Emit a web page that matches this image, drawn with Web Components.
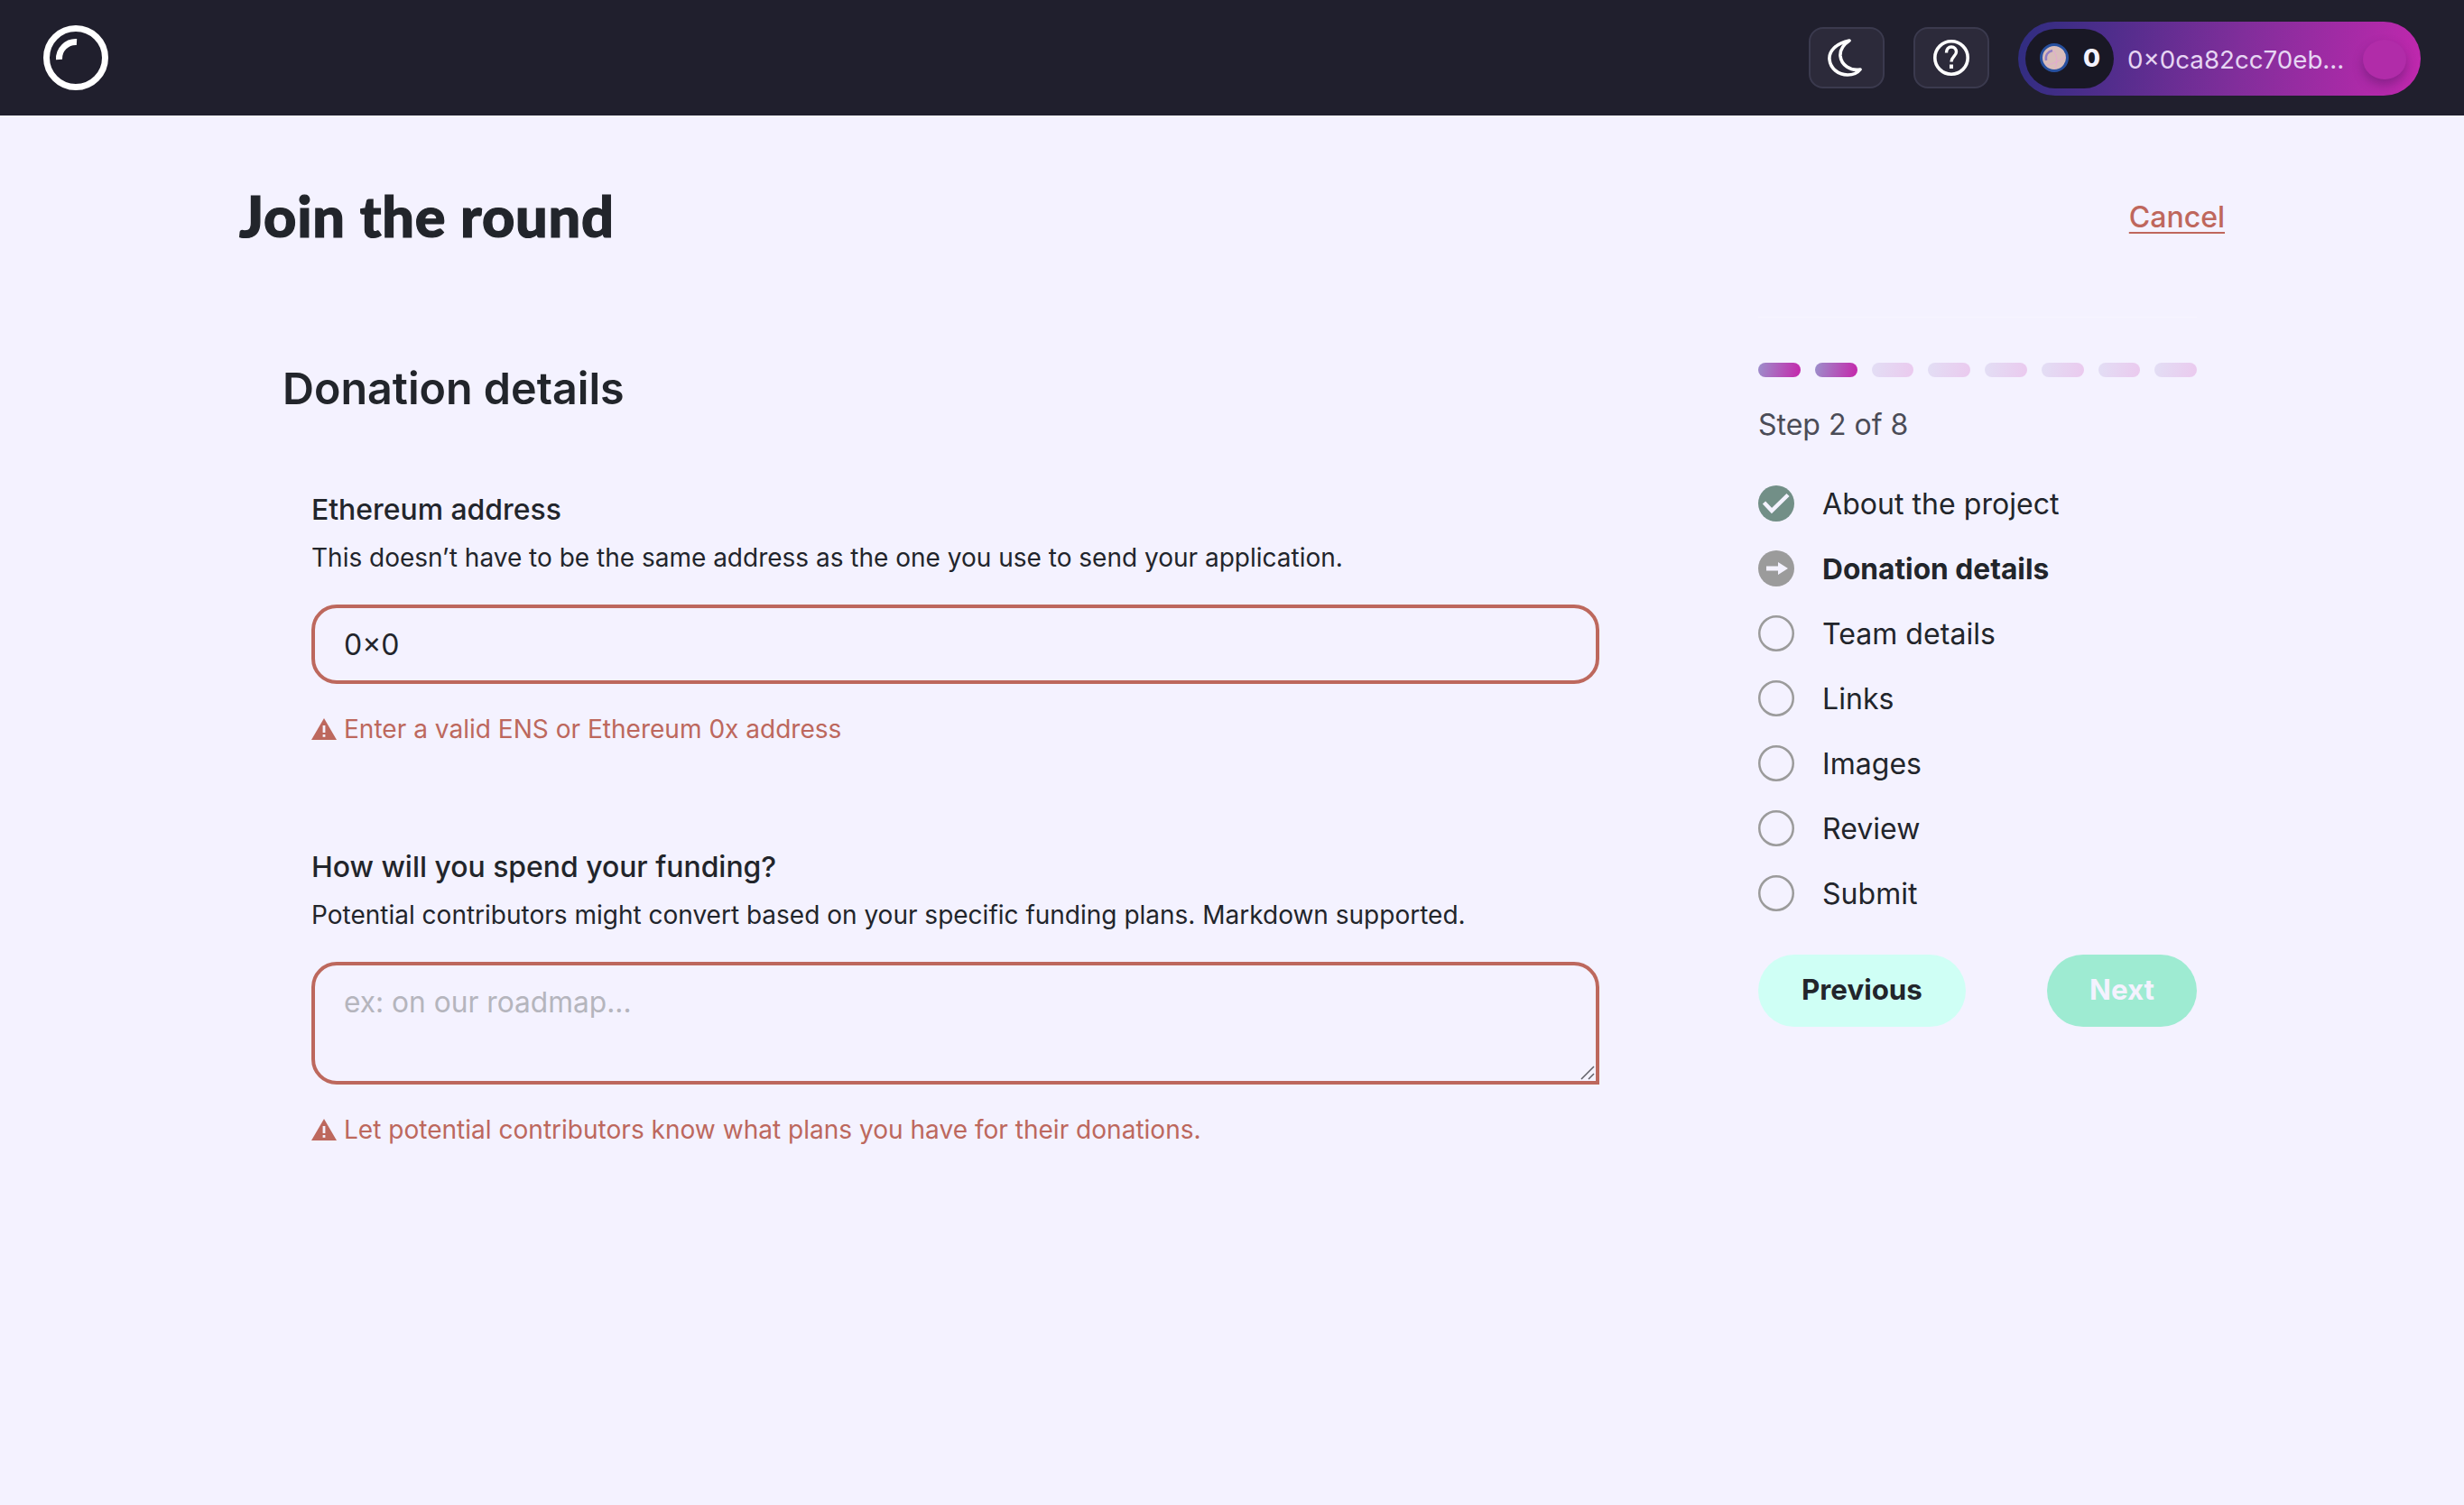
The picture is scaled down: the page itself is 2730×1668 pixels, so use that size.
<!DOCTYPE html>
<html>
<head>
<meta charset="utf-8">
<title>Join the round</title>
<style>
    html, body { margin: 0; padding: 0; }
    body { background: #f4f2ff; font-family: 'Inter', sans-serif; color: #22252b; width: 2730px; height: 1668px; overflow: hidden; }
</style>
</head>
<body>
<top-bar></top-bar>
<page-layout>
    <span slot="title">Join the round</span>
    <span slot="cancel">Cancel</span>
    <span slot="heading">Donation details</span>
    <form-field slot="form" label="Ethereum address" help="This doesn’t have to be the same address as the one you use to send your application." error="Enter a valid ENS or Ethereum 0x address" value="0×0"></form-field>
    <form-field slot="form" class="second" multiline label="How will you spend your funding?" help="Potential contributors might convert based on your specific funding plans. Markdown supported." error="Let potential contributors know what plans you have for their donations." placeholder="ex: on our roadmap..."></form-field>
    <step-panel slot="side"></step-panel>
</page-layout>

<script>
class TopBar extends HTMLElement {
    constructor() {
        super()
        this.attachShadow({ mode: 'open' });
    };

    connectedCallback() {
        this.shadowRoot.innerHTML = `
            <style>
                :host { display: flex; height: 128px; background: #201f2d; padding: 0 48px; box-sizing: border-box; align-items: center; justify-content: space-between; }
                .logo { width: 72px; height: 72px; display: block; }
                .right { display: flex; align-items: center; gap: 32px; margin-top: 2px; }
                .btn { width: 84px; height: 68px; box-sizing: border-box; border: 2px solid #3b3a4e; border-radius: 16px; background: #2c2a3a; display: flex; align-items: center; justify-content: center; margin-top: -2px; }
                .moon { margin-right: 5px; }
                .wallet { width: 446px; height: 82px; border-radius: 41px; box-sizing: border-box; padding: 8px 0 8px 8px; display: flex; align-items: center; background: linear-gradient(100deg, #2f2d80 0%, #4e2d8b 22%, #812e9b 55%, #c128ae 100%); position: relative; }
                .pill { width: 98px; height: 66px; border-radius: 33px; background: #191825; display: flex; align-items: center; box-sizing: border-box; padding-left: 16px; }
                .pill svg { width: 32px; height: 32px; display: block; margin-top: -2px; }
                .count { color: #f4f2ff; font-size: 27.5px; font-weight: 800; margin-left: 16px; margin-top: -2px; }
                .addr { color: #e6d5f3; font-size: 27.7px; margin-left: 15px; margin-top: 1px; white-space: nowrap; }
                .knob { position: absolute; left: 382px; top: 20px; width: 48px; height: 44px; border-radius: 50%; background: #b12ca9; box-shadow: 0 6px 12px rgba(70, 20, 90, .4); }
            </style>
            <svg class="logo" viewBox="0 0 72 72">
                <circle cx="36" cy="36" r="32.5" fill="none" stroke="#fff" stroke-width="7"/>
                <path d="M37 18.5A18.5 18.5 0 0 0 17.5 38" fill="none" stroke="#fff" stroke-width="7"/>
            </svg>
            <div class="right">
                <div class="btn">
                    <svg class="moon" width="38" height="42" viewBox="0 0 38 42">
                        <path d="M24 2C9 5 1 14 2 23C3 33 12 40 22 40C28 40 33 38 36 34C25 36 15 29 14 19C13.5 12 18 6 24 2Z" fill="none" stroke="#fff" stroke-width="3.6" stroke-linejoin="round"/>
                    </svg>
                </div>
                <div class="btn">
                    <svg width="40" height="40" viewBox="0 0 40 40">
                        <circle cx="20" cy="20" r="18.2" fill="none" stroke="#fff" stroke-width="3.6"/>
                        <path d="M14.5 14.5C14.5 10.5 17 8 20 8C23.5 8 25.5 10.500 25.5 13.5C25.5 18 20 19 20 24.5" fill="none" stroke="#fff" stroke-width="3.4"/>
                        <rect x="18" y="27.5" width="4" height="4.5" fill="#fff"/>
                    </svg>
                </div>
                <div class="wallet">
                    <div class="pill">
                        <svg viewBox="0 0 32 32">
                            <circle cx="16" cy="16" r="14.5" fill="#d9bdbb" stroke="#27509f" stroke-width="3"/>
                            <path d="M7 19C6 13 9 9 14 8" fill="none" stroke="#8f7cc4" stroke-width="2.5"/>
                            <path d="M15 8C19 13 20 20 17 28M8 24C15 23 22 19 28 15" fill="none" stroke="#e3a9d2" stroke-width="1"/>
                        </svg>
                        <span class="count">0</span>
                    </div>
                    <span class="addr">0×0ca82cc70eb...</span>
                    <div class="knob"></div>
                </div>
            </div>
        `;
    };
};

class PageLayout extends HTMLElement {
    constructor() {
        super()
        this.attachShadow({ mode: 'open' });
    };

    connectedCallback() {
        this.shadowRoot.innerHTML = `
            <style>
                :host { display: block; padding: 64px 265px 0; box-sizing: border-box; }
                .head { display: flex; justify-content: space-between; align-items: center; height: 96px; }
                h1 { margin: -2px 0 0; font-family: 'Lato', sans-serif; font-weight: 900; font-size: 63px; line-height: 96px; letter-spacing: .8px; -webkit-text-stroke: 1.2px #22252b; color: #22252b; }
                a { color: #bf675c; font-size: 32px; font-weight: 500; text-decoration: underline; text-underline-offset: 5px; text-decoration-thickness: 2px; }
                .grid { display: grid; grid-template-columns: 1507px 486px; column-gap: 176px; margin-top: 63px; }
                .left { padding: 50px 0 0 48px; box-sizing: border-box; }
                h2 { margin: 0; font-size: 48.4px; line-height: 60px; font-weight: 600; color: #22252b; }
            </style>
            <div class="head">
                <h1><slot name="title"></slot></h1>
                <a><slot name="cancel"></slot></a>
            </div>
            <div class="grid">
                <div class="left">
                    <h2><slot name="heading"></slot></h2>
                    <slot name="form"></slot>
                </div>
                <slot name="side"></slot>
            </div>
        `;
    };
};

class FormField extends HTMLElement {
    constructor() {
        super()
        this.attachShadow({ mode: 'open' });
    };

    connectedCallback() {
        const multi = this.hasAttribute("multiline");
        const value = this.getAttribute("value");
        const text = value
            ? `<span class="val">${value}</span>`
            : `<span class="ph">${this.getAttribute("placeholder")}</span>`;
        this.shadowRoot.innerHTML = `
            <style>
                :host { display: block; margin-left: 32px; margin-top: ${multi ? 110 : 81}px; }
                .label { font-size: 31.9px; line-height: 46px; font-weight: 500; color: #22252b; }
                .help { font-size: 28px; line-height: 40px; margin-top: 10px; color: #22252b; white-space: nowrap; }
                .box { margin-top: 32px; width: 1427px; height: ${multi ? 136 : 88}px; box-sizing: border-box; border: 4px solid #bd685d; border-radius: ${multi ? "28px 28px 0 28px" : "28px"}; padding: ${multi ? "21px 32px 0" : "2px 32px 0"}; display: flex; align-items: ${multi ? "flex-start" : "center"}; font-size: 32px; line-height: 40px; position: relative; }
                .val { color: #22252b; }
                .ph { color: #b5b5bd; font-size: 31.7px; }
                .grip { position: absolute; right: 1px; bottom: 1px; }
                .err { margin-top: 30px; display: flex; align-items: center; gap: 8px; color: #bd685d; font-size: 28.05px; line-height: 40px; }
                .err svg { display: block; flex: none; }
            </style>
            <div class="label">${this.getAttribute("label")}</div>
            <div class="help">${this.getAttribute("help")}</div>
            <div class="box">
                ${text}
                ${multi ? `<svg class="grip" width="16" height="16" viewBox="0 0 16 16"><path d="M1 15L15 1M9 15L15 9" stroke="#5f5f66" stroke-width="1.5"/></svg>` : ""}
            </div>
            <div class="err">
                <svg width="28" height="24" viewBox="0 0 28 24">
                    <path d="M14 0L28 24H0Z" fill="#bd685d"/>
                    <rect x="12.6" y="8" width="2.8" height="8" fill="#f4f2ff"/>
                    <rect x="12.6" y="18" width="2.8" height="2.8" fill="#f4f2ff"/>
                </svg>
                <span>${this.getAttribute("error")}</span>
            </div>
        `;
    };
};

class StepPanel extends HTMLElement {
    constructor() {
        super()
        this.attachShadow({ mode: 'open' });
    };

    connectedCallback() {
        const steps = ["About the project", "Donation details", "Team details", "Links", "Images", "Review", "Submit"];
        const bars = [1, 2, 3, 4, 5, 6, 7, 8].map((n) => `<i class="${n <= 2 ? "on" : ""}"></i>`).join("");
        const rows = steps.map((name, i) => `<step-row state="${i === 0 ? "done" : i === 1 ? "current" : "todo"}">${name}</step-row>`).join("");
        this.shadowRoot.innerHTML = `
            <style>
                :host { display: block; border-top: 1px solid #f7f5ff; padding-top: 50px; }
                .bars { display: flex; gap: 16px; height: 16px; }
                .bars i { flex: 1; border-radius: 8px; background: linear-gradient(100deg, #9c8fcb, #c527ab); opacity: .2; }
                .bars i.on { opacity: 1; }
                .count { margin-top: 31px; font-size: 32px; line-height: 44px; color: #4b4c57; }
                .rows { margin-top: 29px; }
                .actions { display: flex; justify-content: space-between; margin-top: 32px; }
                button { border: 0; height: 80px; border-radius: 40px; font-family: 'Inter', sans-serif; font-size: 31.3px; font-weight: 700; padding: 0 0 2px; }
                .prev { width: 230px; background: #cffff5; color: #22252b; }
                .next { width: 166px; background: #9eebd2; color: #f4f2ff; }
            </style>
            <div class="bars">${bars}</div>
            <div class="count">Step 2 of 8</div>
            <div class="rows">${rows}</div>
            <div class="actions">
                <button class="prev">Previous</button>
                <button class="next">Next</button>
            </div>
        `;
    };
};

class StepRow extends HTMLElement {
    constructor() {
        super()
        this.attachShadow({ mode: 'open' });
    };

    connectedCallback() {
        const state = this.getAttribute("state");
        const icons = {
            done: `<circle cx="20" cy="20" r="20" fill="#728f87"/><path d="M6.5 19L15 28L33 10.5" fill="none" stroke="#f4f2ff" stroke-width="4.5"/>`,
            current: `<circle cx="20" cy="20" r="20" fill="#9b9b9b"/><path d="M9 17.5H22V13L33 20L22 27V22.5H9Z" fill="#f4f2ff"/>`,
            todo: `<circle cx="20" cy="20" r="18.75" fill="none" stroke="#9b9b9b" stroke-width="2.5"/>`
        };
        this.shadowRoot.innerHTML = `
            <style>
                :host { display: flex; height: 72px; align-items: center; gap: 31px; font-size: ${state === "current" ? 31.7 : 32}px; color: #22252b; font-weight: ${state === "current" ? 700 : 400}; }
                svg { display: block; flex: none; }
                span { letter-spacing: ${state === "current" ? 0 : .05}px; }
            </style>
            <svg width="40" height="40" viewBox="0 0 40 40">${icons[state]}</svg>
            <span><slot></slot></span>
        `;
    };
};

customElements.define("top-bar", TopBar);
customElements.define("page-layout", PageLayout);
customElements.define("form-field", FormField);
customElements.define("step-panel", StepPanel);
customElements.define("step-row", StepRow);
</script>
</body>
</html>
